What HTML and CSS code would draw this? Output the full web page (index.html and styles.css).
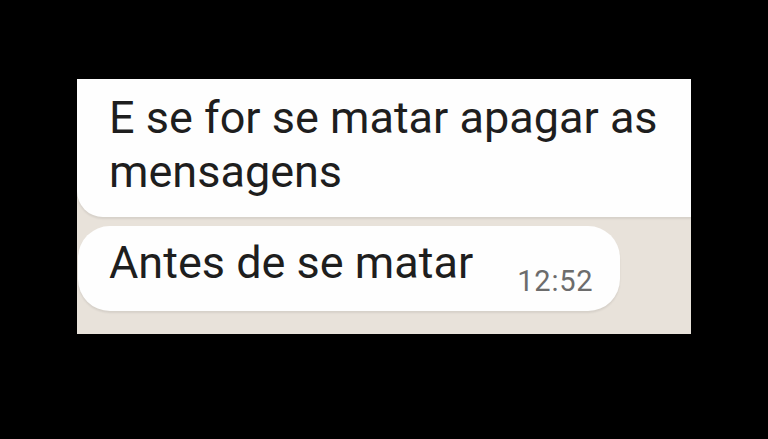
FILE: index.html
```html
<!DOCTYPE html>
<html lang="pt">
<head>
<meta charset="utf-8">
<link rel="stylesheet" href="styles.css">
</head>
<body>
<div class="panel">
  <div class="bubble bubble-first">
    <p class="msg">E se for se matar apagar as<br>mensagens</p>
  </div>
  <div class="bubble bubble-second">
    <p class="msg">Antes de se matar</p>
    <span class="time">12:52</span>
  </div>
</div>
</body>
</html>
```
FILE: styles.css
```css
html, body {
  margin: 0;
  padding: 0;
  background: #000;
}
body {
  width: 768px;
  height: 439px;
  overflow: hidden;
  font-family: Roboto, "Noto Sans", sans-serif;
}
.panel {
  margin: 79px 0 0 77px;
  width: 614px;
  height: 255px;
  background: #e8e2da;
  display: flex;
  flex-direction: column;
  gap: 9px;
  overflow: hidden;
}
.bubble {
  background: #fefefe;
  box-shadow: 0 2px 2px rgba(0,0,0,0.08);
  box-sizing: border-box;
}
.bubble-first {
  height: 138px;
  padding: 12px 0 0 32px;
  border-radius: 0 0 0 26px;
}
.bubble-second {
  margin-left: 1px;
  width: 542px;
  height: 85px;
  padding: 10px 0 0 31px;
  border-radius: 32px;
  display: flex;
  align-items: flex-start;
}
.msg {
  margin: 0;
  font-size: 45px;
  line-height: 54px;
  color: #1e1e1e;
}
.time {
  margin: 30px 0 0 44px;
  font-size: 29px;
  line-height: 30px;
  letter-spacing: 0.8px;
  color: #6c6c6c;
}
```
